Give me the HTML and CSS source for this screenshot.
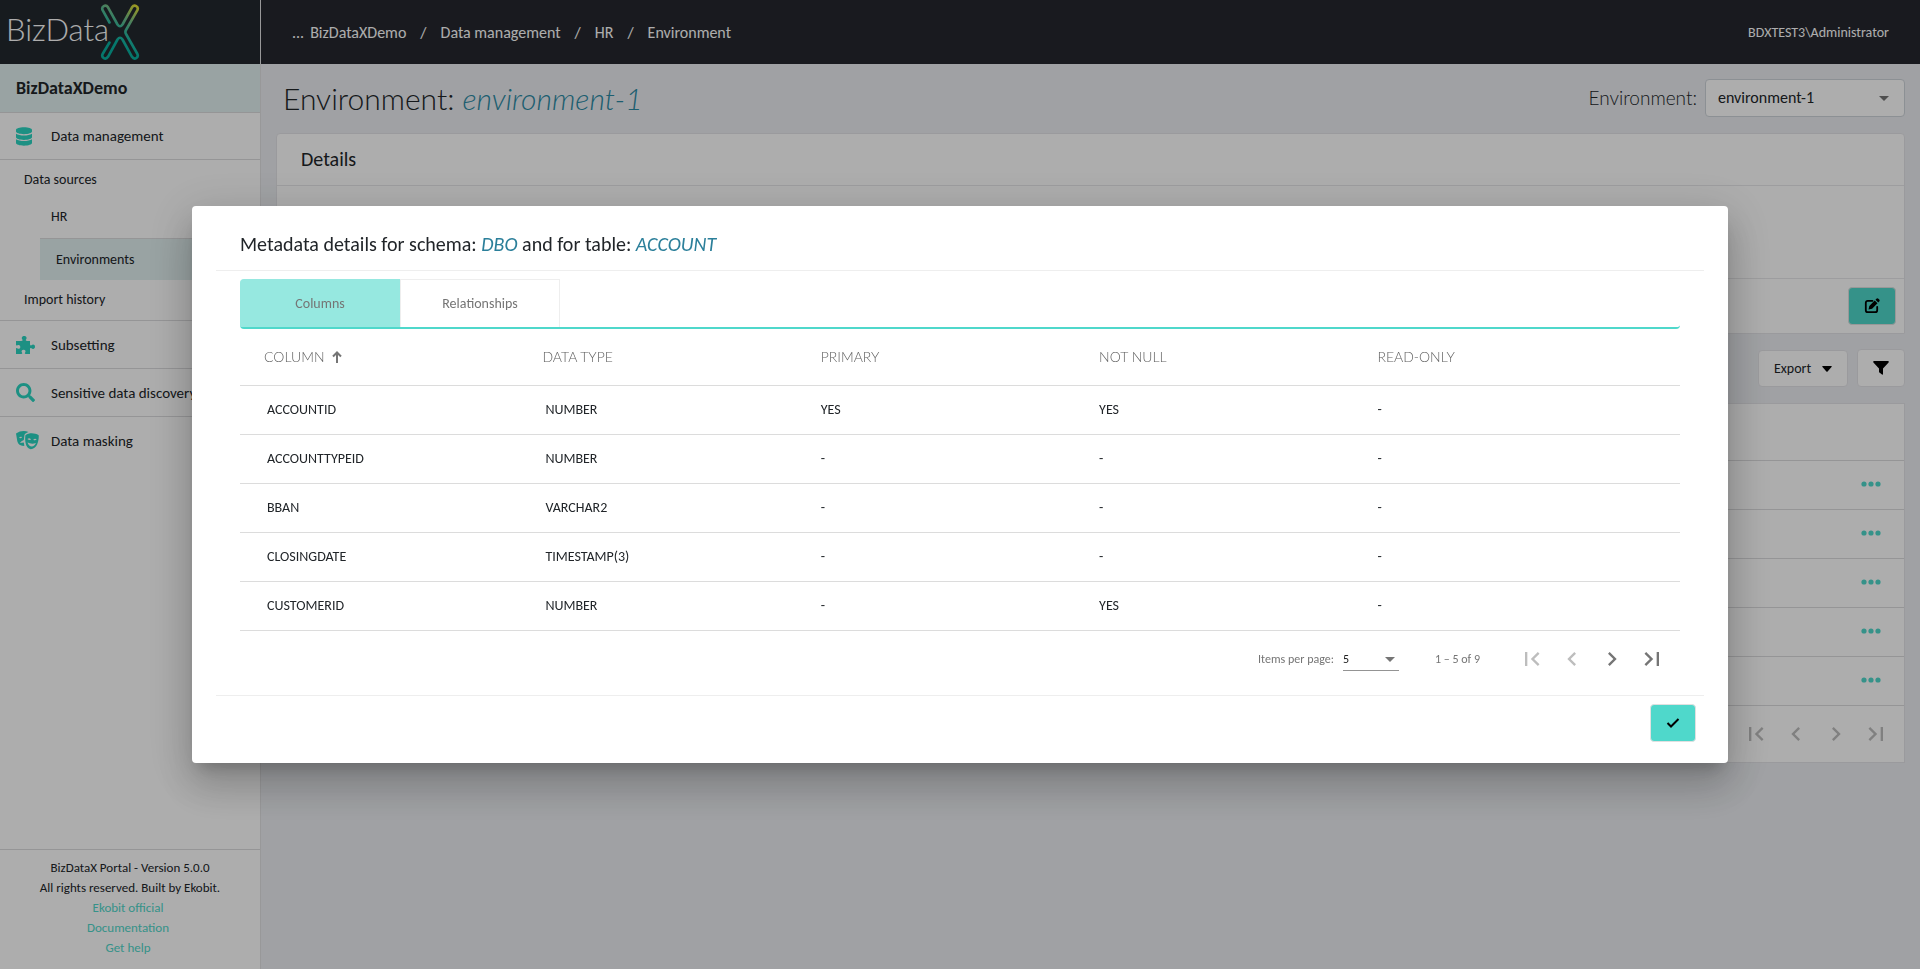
FILE: index.html
```html
<!DOCTYPE html>
<html lang="en">
<head>
<meta charset="utf-8">
<title>BizDataX Portal</title>
<link rel="stylesheet" href="styles.css">
</head>
<body>
<svg class="sprite" aria-hidden="true">
  <symbol id="i-first" viewBox="0 0 24 24"><path d="M18.41 16.59 13.82 12l4.59-4.59L17 6l-6 6 6 6zM6 6h2v12H6z"/></symbol>
  <symbol id="i-prev" viewBox="0 0 24 24"><path d="M15.41 7.41 14 6l-6 6 6 6 1.41-1.41L10.83 12z"/></symbol>
  <symbol id="i-next" viewBox="0 0 24 24"><path d="M10 6 8.59 7.41 13.17 12l-4.58 4.59L10 18l6-6z"/></symbol>
  <symbol id="i-last" viewBox="0 0 24 24"><path d="M5.59 7.41 10.18 12l-4.59 4.59L7 18l6-6-6-6zM16 6h2v12h-2z"/></symbol>
  <symbol id="i-dots" viewBox="0 0 20 6"><circle cx="3" cy="3" r="2.6"/><circle cx="10" cy="3" r="2.6"/><circle cx="17" cy="3" r="2.6"/></symbol>
</svg>
<div class="app">
  <aside class="sidebar">
    <a class="logo" href="#">
      <span class="logo-text">BizData</span>
      <svg class="logo-x" viewBox="0 0 40 58" width="40" height="58" aria-label="X">
        <defs><linearGradient id="lg" x1="36" y1="2" x2="12" y2="38" gradientUnits="userSpaceOnUse"><stop offset="0" stop-color="#e6e030"/><stop offset=".4" stop-color="#6fbd8a"/><stop offset=".75" stop-color="#1fb8a4"/><stop offset="1" stop-color="#08b0a0"/></linearGradient></defs>
        <g fill="none" stroke="url(#lg)" stroke-width="2.6" stroke-linecap="round" stroke-linejoin="round">
          <path d="M9.500 19.500 2.600 7.200C1 3.500 5.600.8 8 4.300L17.500 21.500Q20 25 22.500 21.500L32 4.300C34.400.8 39 3.500 37.400 7.200L26 27Q24.800 29 26 31L37.400 51C39 54.700 34.400 57.300 32 53.800L22.500 36.500Q20 33 17.500 36.500L8 53.800C5.600 57.300 1 54.700 2.600 51L9.500 39.500"/>
        </g>
      </svg>
    </a>
    <div class="project">BizDataXDemo</div>
    <nav class="menu">
      <a class="item first" href="#"><svg class="icon" viewBox="0 0 448 512" width="16" height="19"><path d="M448 73v46c0 40-100 73-224 73S0 159 0 119V73C0 33 100 0 224 0s224 33 224 73zm0 103v103c0 40-100 73-224 73S0 319 0 279V176c48 33 136 49 224 49s176-16 224-49zm0 160v103c0 40-100 73-224 73S0 479 0 439V336c48 33 136 49 224 49s176-16 224-49z"/></svg><span>Data management</span></a>
      <div class="group">
        <a class="sub" href="#">Data sources</a>
        <a class="subsub" href="#">HR</a>
        <a class="subsub current" href="#">Environments</a>
        <a class="sub" href="#">Import history</a>
      </div>
      <a class="item" href="#"><svg class="icon" viewBox="0 0 19 18" width="19" height="18"><path d="M0 5h5.200C6.600 5 6.900 4.300 6.400 3.600 5 1.800 6.200 0 8.200 0s3.200 1.800 1.800 3.600C9.500 4.300 9.800 5 11.200 5H14v3c0 1.400.7 1.700 1.400 1.200C17.200 7.800 19 8.800 19 10.700s-1.800 3-3.600 1.600c-.7-.5-1.400-.2-1.400 1.200V18H9.800c-1 0-1.200-.6-.8-1.200 1.200-1.600.4-3.100-1.400-3.100s-2.700 1.500-1.500 3.100c.4.600.2 1.200-.8 1.200H0v-5.200c0-.8.600-1 1.200-.6 1.600 1.100 3.100.4 3.100-1.300S2.800 8.300 1.200 9.400C.6 9.800 0 9.500 0 8.800z"/></svg><span>Subsetting</span></a>
      <a class="item" href="#"><svg class="icon" viewBox="0 0 512 512" width="19" height="19"><path d="M505 442.700 405.300 343c-4.500-4.500-10.600-7-17-7H372c27.600-35.300 44-79.700 44-128C416 93.100 322.900 0 208 0S0 93.100 0 208s93.100 208 208 208c48.300 0 92.700-16.400 128-44v16.300c0 6.400 2.500 12.500 7 17l99.700 99.700c9.400 9.400 24.600 9.400 33.900 0l28.300-28.300c9.400-9.400 9.400-24.600.1-34zM208 336c-70.700 0-128-57.200-128-128 0-70.700 57.200-128 128-128 70.700 0 128 57.200 128 128 0 70.700-57.200 128-128 128z"/></svg><span>Sensitive data discovery</span></a>
      <a class="item" href="#"><svg class="icon" viewBox="0 0 23 19" width="23" height="19"><path fill-rule="evenodd" d="M0 2.500C4-.3 8.500-.6 12.500.9 10 1.700 8.600 2.800 8.400 4.300L7.800 9l-2.300 1.200-1.600 1.900 3.900-.6.600 3.300C5 15.300 2 13.300 1.300 10.200zM3 6.600q1.600-1.600 3.200-.5Q5.300 8 3 6.600zM9.400 4.200c4-2.600 9.200-2.400 13.300.1.200 3-.3 6.300-1.600 9.300-1 2.600-3.700 4.500-6.400 4.700-2.600-.4-4.500-3-5-5.700C9 9.800 9.100 7 9.400 4.200zM11.400 8q1.700 1.800 3.600.5-1.500-2-3.600-.5zm5.800.7q1.800 1.200 3.500-.3-1.800-1.500-3.500.3zM11.500 11.500q1.500 4 4.200 4.100 2.800-.1 4.200-3.500-4.500 1.300-8.400-.6z"/></svg><span>Data masking</span></a>
    </nav>
    <footer class="about">
      <div>BizDataX Portal - Version 5.0.0</div>
      <div>All rights reserved. Built by Ekobit.</div>
      <a href="#">Ekobit official</a>
      <a href="#">Documentation</a>
      <a href="#">Get help</a>
    </footer>
  </aside>
  <div class="page">
    <header class="topbar">
      <nav class="crumbs"><span class="dots">...</span><a href="#">BizDataXDemo</a><span class="sep">/</span><a href="#">Data management</a><span class="sep">/</span><a href="#">HR</a><span class="sep">/</span><a href="#">Environment</a></nav>
      <span class="user">BDXTEST3\Administrator</span>
    </header>
    <main class="content">
      <div class="title-row">
        <h1>Environment: <em>environment-1</em></h1>
        <label for="env">Environment:</label>
        <span class="select env"><select id="env"><option>environment-1</option></select></span>
      </div>
      <section class="card">
        <h2>Details</h2>
        <div class="details"></div>
        <div class="card-actions"><button class="btn primary edit" aria-label="Edit"><svg viewBox="0 0 16 16" width="16" height="16"><path d="M8.500 2.800H3.800Q1.800 2.800 1.800 4.800V12.200Q1.800 14.200 3.800 14.200H11.200Q13.200 14.200 13.200 12.200V8.800" fill="none" stroke="#000" stroke-width="1.8" stroke-linecap="round"/><path d="m10.700 2.500 2.800 2.800-5.400 5.400-3.600.8.800-3.600zM11.500 1.700l.9-.9q1-.9 2 0l.8.800q.9 1 0 2l-.9.900z"/></svg></button></div>
      </section>
      <div class="tools">
        <button class="btn export">Export <svg viewBox="0 0 10 6" width="10" height="6"><path d="M.5 0h9q.5.300 0 1L5.600 5.500q-.6.500-1.200 0L.5 1Q0 .3.500 0z"/></svg></button>
        <button class="btn filter" aria-label="Filter"><svg viewBox="0 0 16 14" width="16" height="14"><path d="M1 0h14q1.200.4.600 1.400L10 7.500V13q0 1-1 .6L6.400 11.600Q6 11.300 6 11V7.500L.4 1.400Q-.2.400 1 0z"/></svg></button>
      </div>
      <section class="list">
        <div class="list-head"></div>
        <div class="list-row"><button aria-label="More"><svg><use href="#i-dots"/></svg></button></div>
        <div class="list-row"><button aria-label="More"><svg><use href="#i-dots"/></svg></button></div>
        <div class="list-row"><button aria-label="More"><svg><use href="#i-dots"/></svg></button></div>
        <div class="list-row"><button aria-label="More"><svg><use href="#i-dots"/></svg></button></div>
        <div class="list-row"><button aria-label="More"><svg><use href="#i-dots"/></svg></button></div>
        <div class="pager">
          <button disabled aria-label="First page"><svg><use href="#i-first"/></svg></button>
          <button disabled aria-label="Previous page"><svg><use href="#i-prev"/></svg></button>
          <button disabled aria-label="Next page"><svg><use href="#i-next"/></svg></button>
          <button disabled aria-label="Last page"><svg><use href="#i-last"/></svg></button>
        </div>
      </section>
    </main>
  </div>
</div>
<div class="backdrop">
  <div class="modal" role="dialog" aria-modal="true" aria-labelledby="dlg-title">
    <h2 id="dlg-title">Metadata details for schema: <em>DBO</em> and for table: <em>ACCOUNT</em></h2>
    <div class="modal-body">
      <div class="tabs" role="tablist">
        <button class="tab active" role="tab" aria-selected="true">Columns</button>
        <button class="tab" role="tab" aria-selected="false">Relationships</button>
      </div>
      <table class="meta">
        <thead><tr><th>COLUMN <svg class="sort" viewBox="0 0 10 12" width="10" height="12"><path d="M5 12V1.500M1 5.500l4-4 4 4" fill="none" stroke="#757575" stroke-width="2"/></svg></th><th>DATA TYPE</th><th>PRIMARY</th><th>NOT NULL</th><th>READ-ONLY</th></tr></thead>
        <tbody>
          <tr><td>ACCOUNTID</td><td>NUMBER</td><td>YES</td><td>YES</td><td>-</td></tr>
          <tr><td>ACCOUNTTYPEID</td><td>NUMBER</td><td>-</td><td>-</td><td>-</td></tr>
          <tr><td>BBAN</td><td>VARCHAR2</td><td>-</td><td>-</td><td>-</td></tr>
          <tr><td>CLOSINGDATE</td><td>TIMESTAMP(3)</td><td>-</td><td>-</td><td>-</td></tr>
          <tr><td>CUSTOMERID</td><td>NUMBER</td><td>-</td><td>YES</td><td>-</td></tr>
        </tbody>
      </table>
      <div class="pager">
        <label for="size">Items per page:</label>
        <span class="select size"><select id="size"><option>5</option></select></span>
        <span class="range">1 – 5 of 9</span>
        <button disabled aria-label="First page"><svg><use href="#i-first"/></svg></button>
        <button disabled aria-label="Previous page"><svg><use href="#i-prev"/></svg></button>
        <button aria-label="Next page"><svg><use href="#i-next"/></svg></button>
        <button aria-label="Last page"><svg><use href="#i-last"/></svg></button>
      </div>
    </div>
    <div class="modal-actions"><button class="btn primary ok" aria-label="OK"><svg viewBox="0 0 14 12" width="14" height="12"><path d="M1.500 6 5 9.500 12.500 2" fill="none" stroke="#000" stroke-width="2"/></svg></button></div>
  </div>
</div>
</body>
</html>
```
FILE: styles.css
```css
* { box-sizing: border-box; }
body {
  margin: 0;
  font-family: Calibri, Carlito, Lato, sans-serif;
  font-size: 14px;
  line-height: 20px;
  color: #212529;
}
a { color: inherit; text-decoration: none; }
button, select { font: inherit; color: inherit; }
button { border: 0; padding: 0; background: none; }
.sprite { position: absolute; width: 0; height: 0; }

.app { display: flex; min-height: 100vh; background: #eceef2; }

.sidebar {
  flex: 0 0 261px;
  display: flex;
  flex-direction: column;
  background: #fff;
  border-right: 1px solid #e0e0e2;
}
.logo {
  height: 64px;
  display: flex;
  align-items: flex-start;
  padding: 3px 0 0 6px;
  background: #23292f;
}
.logo-text { font-family: Lato, sans-serif; font-size: 31px; line-height: 52px; font-weight: 300; color: #fff; }
.logo-x { margin-left: -9px; }
.project {
  height: 49px;
  padding: 0 16px;
  font-size: 18px;
  line-height: 48px;
  font-weight: 700;
  background: #e2f0f0;
  border-bottom: 1px solid #dcdcde;
}
.item {
  height: 47px;
  display: grid;
  grid-template-columns: 35px 1fr;
  align-items: center;
  padding-left: 16px;
  font-size: 15px;
}
.item.first { height: 46px; }
.item + .item { height: 48px; border-top: 1px solid #dcdcde; }
.item .icon { fill: #2bd5c2; }
.group { border-top: 1px solid #dcdcde; border-bottom: 1px solid #dcdcde; }
.sub { display: block; padding-left: 24px; line-height: 40px; }
.subsub { display: block; margin-left: 40px; padding: 0 0 4px 11px; line-height: 34px; }
.subsub.current {
  padding: 0 0 0 16px;
  line-height: 41px;
  background: #e2f0f0;
  border-top: 1px solid #dcdcde;
}
.about {
  margin-top: auto;
  padding: 8px 0 11px;
  border-top: 1px solid #dcdcde;
  text-align: center;
  font-size: 13px;
}
.about a { display: block; padding-right: 4px; color: #4fd7ca; }

.page { flex: 1; min-width: 0; }
.topbar {
  height: 64px;
  display: flex;
  align-items: center;
  justify-content: space-between;
  padding: 1px 31px 0 31px;
  background: #25272e;
  color: #fff;
}
.crumbs { display: flex; font-size: 16px; }
.dots { margin-right: 6px; }
.sep { margin: 0 14px; }
.user { font-size: 14px; }

.content { padding: 15px; }
.title-row { display: flex; align-items: center; height: 38px; margin-bottom: 16px; padding-left: 7px; }
h1 { flex: 1; margin: 0; font-family: Lato, sans-serif; font-size: 30px; line-height: 36px; font-weight: 300; }
h1 em { color: #2c8ba5; }
.title-row label { margin-right: 8px; font-family: Lato, sans-serif; font-size: 19px; font-weight: 300; }
.select { position: relative; display: inline-flex; }
.select::after {
  content: "";
  position: absolute;
  top: 50%;
  right: 16px;
  margin-top: -2px;
  border: 5px solid transparent;
  border-top-color: #757575;
  border-bottom: 0;
  pointer-events: none;
}
.select select { appearance: none; width: 100%; background: none; outline: 0; }
.env { width: 200px; height: 38px; }
.env select { border: 1px solid #ced4da; border-radius: 4px; background: #fff; padding: 0 12px; font-size: 16px; }

.card { background: #fff; border: 1px solid #e4e4e8; border-radius: 4px 4px 0 0; }
.card h2 {
  margin: 0;
  padding: 0 24px;
  font-size: 20px;
  font-weight: 400;
  line-height: 51px;
  border-bottom: 1px solid #e8e8ea;
}
.details { height: 92px; }
.card-actions { display: flex; justify-content: flex-end; padding: 8px; border-top: 1px solid #e8e8ea; }
.btn {
  display: inline-flex;
  align-items: center;
  justify-content: center;
  height: 38px;
  border: 1px solid #e4e4e8;
  border-radius: 4px;
  background: #fff;
}
.btn.primary { background: #4fd8cb; border-color: #e0e0e0; }
.edit { width: 48px; }
.tools { display: flex; justify-content: flex-end; align-items: flex-end; gap: 9px; padding: 15px 0 16px; }
.export { width: 90px; height: 37px; gap: 11px; }
.filter { width: 48px; }
.list { background: #fff; border: 1px solid #e4e4e8; }
.list-head { height: 56px; }
.list-row { height: 49px; display: flex; justify-content: flex-end; align-items: center; padding: 0 23px 2px 0; border-top: 1px solid #dcdcde; }
.list-row button { display: flex; }
.list-row svg { width: 20px; height: 6px; fill: #4fd7ca; }
.pager { display: flex; align-items: center; justify-content: flex-end; height: 57px; padding-right: 8px; font-size: 12px; color: #757575; }
.list .pager { border-top: 1px solid #dcdcde; }
.pager button { display: flex; align-items: center; justify-content: center; width: 40px; height: 40px; }
.pager svg { width: 28px; height: 28px; fill: #757575; }
.pager button:disabled svg { fill: #bdbdbd; }

.backdrop {
  position: fixed;
  inset: 0;
  display: flex;
  align-items: center;
  justify-content: center;
  background: rgba(0, 0, 0, .32);
}
.modal {
  width: 80%;
  padding: 24px 24px 21px;
  background: #fff;
  border-radius: 4px;
  box-shadow: 0 11px 15px -7px rgba(0,0,0,.2), 0 24px 38px 3px rgba(0,0,0,.14), 0 9px 46px 8px rgba(0,0,0,.12);
}
.modal h2 {
  margin: 0 0 8px;
  padding: 0 24px 12px;
  font-size: 20px;
  font-weight: 400;
  line-height: 28px;
  border-bottom: 1px solid #eee;
}
.modal em { color: #2b7f9a; }
.modal-body { padding: 0 24px 7px; }
.tabs { display: flex; border-bottom: 2px solid #4fd8cb; border-radius: 4px; }
.tab { width: 160px; height: 48px; color: #757575; border: 1px solid #eee; border-bottom: 0; }
.tab.active { background: #96e8e0; border-color: #96e8e0; border-top-left-radius: 4px; }
.meta { width: 100%; table-layout: fixed; border-collapse: collapse; text-align: left; }
.meta tr { border-bottom: 1px solid #dcdcdc; }
.meta th { width: 19.33%; height: 56px; padding: 0; font-family: Lato, sans-serif; font-weight: 300; color: #616161; }
.meta th:first-child { width: 21%; padding-left: 24px; }
.meta th:last-child { width: auto; }
.meta td { height: 49px; padding: 0; }
.meta td:first-child { padding-left: 27px; }
.meta td:nth-child(2) { padding-left: 3px; }
.sort { margin-left: 4px; vertical-align: -1px; }
.size { width: 56px; height: 24px; margin: 0 36px 0 9px; }
.size::after { right: 4px; }
.size select { border: 0; border-bottom: 1px solid #949494; color: #212121; padding: 0; }
.range { margin-right: 32px; }
.modal-actions { display: flex; justify-content: flex-end; padding: 8px 8px 0 0; border-top: 1px solid #eee; }
.ok { width: 46px; }
```
